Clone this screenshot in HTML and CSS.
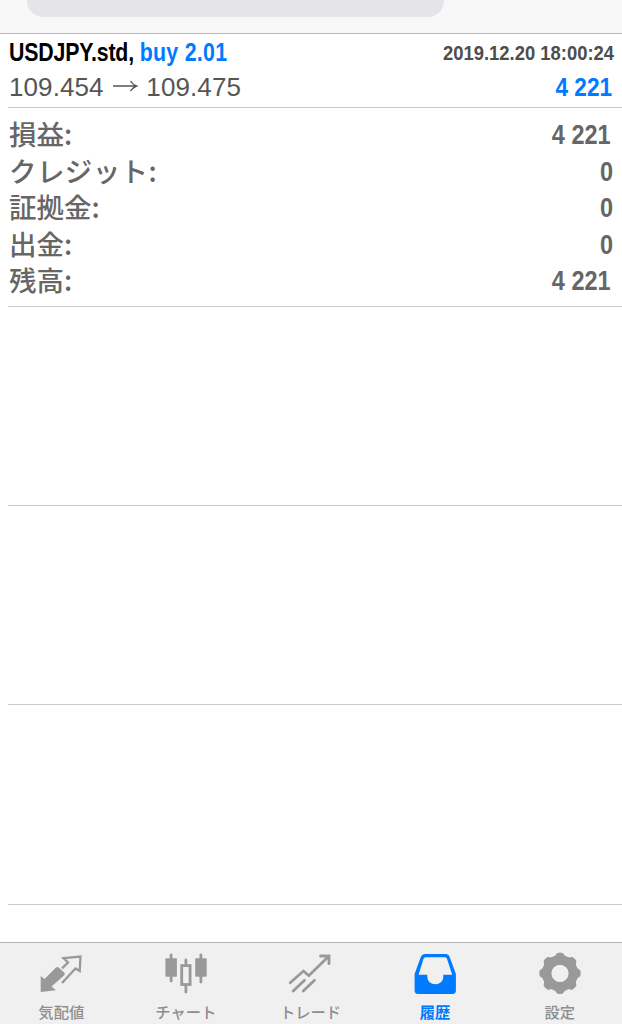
FILE: index.html
```
<!DOCTYPE html>
<html lang="ja">
<head>
  <meta charset="utf-8">
  <title>履歴</title>
  <link rel="stylesheet" href="styles.css">
</head>
<body>
  <header class="topbar">
    <div class="segment"></div>
  </header>

  <main class="history">
    <section class="deal">
      <div class="line">
        <div class="symbol">USDJPY.std, <span class="buy">buy 2.01</span></div>
        <div class="date">2019.12.20 18:00:24</div>
      </div>
      <div class="line">
        <div class="prices">109.454
          <svg class="arrow" width="25" height="14" viewBox="0 0 25 14"><path d="M0 7h23M17.500 2q2 3.500 6 5q-4 1.500-6 5"/></svg>
          109.475</div>
        <div class="profit">4 221</div>
      </div>
    </section>

    <section class="summary">
      <div class="total"><span class="label">損益:</span><span class="value wide">4 221</span></div>
      <div class="total"><span class="label kana">クレジット:</span><span class="value">0</span></div>
      <div class="total"><span class="label">証拠金:</span><span class="value">0</span></div>
      <div class="total"><span class="label">出金:</span><span class="value">0</span></div>
      <div class="total"><span class="label">残高:</span><span class="value wide">4 221</span></div>
    </section>
    <div class="empty"></div>
    <div class="empty"></div>
    <div class="empty last"></div>
  </main>

  <nav class="tabbar">
    <div class="tab">
      <svg width="44" height="44" viewBox="0 0 44 44">
        <path class="fill" d="M1.700 40V24l3.800 3L16.700 15.700q1.700-1.500 3.300 0l5.300 5q1 1.300 0 2.600L12.500 34.500l4.500 3.800z"/>
        <path class="thin" d="M23 16.300l6-5.800-4.500-4.300 17-1.700-.8 14.500-4.200-2.500-13.500 14.500"/>
      </svg>
      <span>気配値</span>
    </div>
    <div class="tab">
      <svg width="44" height="44" viewBox="0 0 44 44">
        <path class="stroke" d="M7.100 3v26M36.900 3v27M21.900 8v5M21.900 34v6"/>
        <rect class="fill" x="1.400" y="6.300" width="11.500" height="18.400" rx="1"/>
        <rect class="fill" x="31.200" y="6.300" width="11.500" height="18.400" rx="1"/>
        <rect class="stroke" x="17.700" y="13.600" width="8.400" height="18.900"/>
      </svg>
      <span>チャート</span>
    </div>
    <div class="tab">
      <svg width="44" height="44" viewBox="0 0 44 44">
        <path class="stroke" d="M2.200 30.700L15.500 19l5.300 4.700L40.500 4.500M32.500 4h8.500v7.700M5.200 39l11.300-10.700M15.200 39l11.300-10.700"/>
      </svg>
      <span>トレード</span>
    </div>
    <div class="tab active">
      <svg width="44" height="44" viewBox="0 0 44 44">
        <path class="fill" fill-rule="evenodd" d="M11.500 2h21.500q2.500 0 3.500 2.500l6.400 17.500v16.500q0 3.500-3.500 3.500H5.100q-3.500 0-3.500-3.500V22L8 4.500Q9 2 11.500 2zM12.500 5.300q-1.500 0-2 1.500L5.600 22.700h8.700v2.300a8 7.300 0 0 0 16 0v-2.300h8.900L34 6.800q-.5-1.500-2-1.500z"/>
      </svg>
      <span>履歴</span>
    </div>
    <div class="tab">
      <svg width="44" height="44" viewBox="0 0 44 44">
        <circle class="ring" cx="22" cy="21.300" r="13.300"/>
        <path id="tooth" class="fill" d="M14 7l2.500-2.500 1.500-2q.8-1.800 2.500-1.800h3q1.700 0 2.500 1.800l1.500 2L30 7l-3 4H17z"/>
        <use href="#tooth" transform="rotate(45 22 21.300)"/>
        <use href="#tooth" transform="rotate(90 22 21.300)"/>
        <use href="#tooth" transform="rotate(135 22 21.300)"/>
        <use href="#tooth" transform="rotate(180 22 21.300)"/>
        <use href="#tooth" transform="rotate(225 22 21.300)"/>
        <use href="#tooth" transform="rotate(270 22 21.300)"/>
        <use href="#tooth" transform="rotate(315 22 21.300)"/>
      </svg>
      <span>設定</span>
    </div>
  </nav>
</body>
</html>
```
FILE: styles.css
```
* {
  box-sizing: border-box;
}

body {
  margin: 0;
  height: 1024px;
  display: flex;
  flex-direction: column;
  overflow: hidden;
  background: #fff;
  color: #666;
  font-family: "Liberation Sans", "Noto Sans CJK JP", sans-serif;
}

.topbar {
  height: 34px;
  flex: none;
  background: #f8f8f9;
  border-bottom: 1px solid #b9b9bb;
}

.segment {
  width: 417px;
  height: 17px;
  margin-left: 27px;
  background: #e5e5e9;
  border-radius: 0 0 16px 16px;
}

.history {
  flex: 1;
  padding-left: 8px;
}

.deal {
  height: 74px;
  padding: 1px 10px 0 1px;
  border-bottom: 1px solid #c9c9cc;
}

.line {
  height: 35px;
  line-height: 35px;
  display: flex;
  justify-content: space-between;
  white-space: nowrap;
}

/* condensed bold */
.symbol,
.date,
.profit,
.value {
  font-weight: bold;
  transform: scaleX(0.87);
  transform-origin: right;
}

.symbol {
  font-size: 26px;
  letter-spacing: -0.2px;
  color: #000;
  transform: scaleX(0.82);
  transform-origin: left;
}

.buy {
  letter-spacing: 0.35px;
}

.buy,
.profit {
  color: #007aff;
}

.date {
  font-size: 21px;
  color: #4d4d4d;
  margin-right: -2px;
  transform: scaleX(0.877);
}

.prices {
  font-size: 26px;
  letter-spacing: 0.1px;
  color: #555;
}

.arrow {
  margin: 0 1px 0 2px;
  vertical-align: 3px;
  fill: none;
  stroke: #555;
  stroke-width: 1.4;
}

.profit {
  font-size: 26px;
}

.summary {
  height: 199px;
  padding: 8px 9px 0 1px;
  border-bottom: 1px solid #c9c9cc;
}

.total {
  height: 36.6px;
  line-height: 38px;
  display: flex;
  justify-content: space-between;
}

.label {
  font-family: "Noto Sans CJK JP", sans-serif;
  font-size: 27.5px;
  font-weight: 500;
  line-height: 34px;
}

.kana {
  letter-spacing: 0.4px;
}

.value {
  font-size: 27px;
}

.wide {
  margin-right: 2px;
}

.empty {
  height: 199px;
  border-bottom: 1px solid #c9c9cc;
}

.last {
  height: 200px;
}

.tabbar {
  height: 82px;
  flex: none;
  margin-left: -1px;
  display: grid;
  grid-template-columns: repeat(5, 1fr);
  background: #f0f0f0;
  border-top: 1px solid #b5b5b5;
  color: #999;
}

.tab {
  display: flex;
  flex-direction: column;
  align-items: center;
  padding-top: 9px;
  font-family: "Noto Sans CJK JP", sans-serif;
  font-size: 15.3px;
  font-weight: 500;
  line-height: 22px;
}

.tab span {
  margin-top: 4px;
  color: #8e8e8e;
}

.active {
  color: #007aff;
}

.tab.active span {
  color: #007aff;
  font-weight: 700;
}

.fill,
.tab use {
  fill: currentColor;
}

.stroke,
.thin,
.ring {
  fill: none;
  stroke: currentColor;
}

.stroke {
  stroke-width: 2.8;
  stroke-linecap: round;
}

.thin {
  stroke-width: 2.3;
}

.ring {
  stroke-width: 9.4;
}
```
